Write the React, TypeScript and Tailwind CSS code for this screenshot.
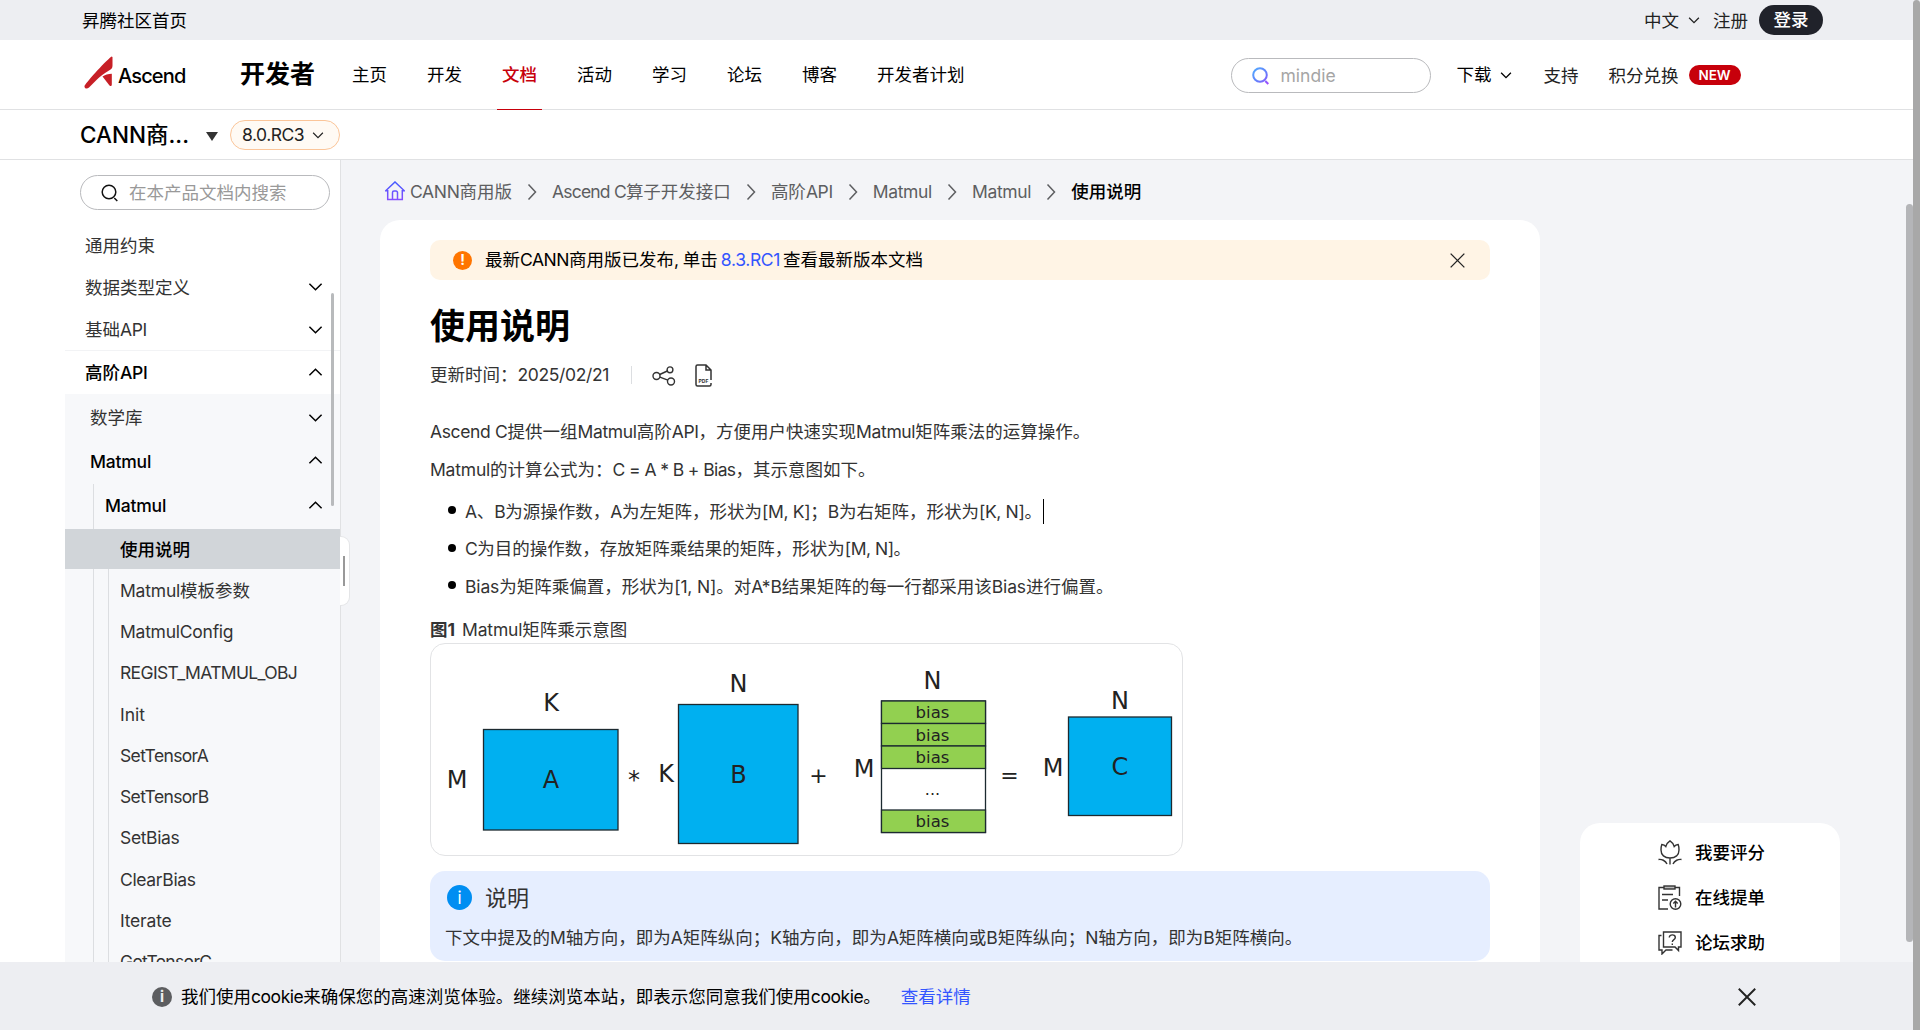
import type { ReactNode } from "react";
import clsx from "clsx";

const navItems = ["主页", "开发", "文档", "活动", "学习", "论坛", "博客", "开发者计划"];

const crumbs = [
  { label: "Ascend C算子开发接口", latin: "tracking-[-0.8px]" },
  { label: "高阶API" },
  { label: "Matmul" },
  { label: "Matmul" },
];

const leafItems = [
  { label: "Matmul模板参数", latin: "tracking-[-0.2px]" },
  { label: "MatmulConfig", latin: "tracking-[-0.25px]" },
  { label: "REGIST_MATMUL_OBJ", latin: "tracking-[-0.65px]" },
  { label: "Init", latin: "tracking-[0px]" },
  { label: "SetTensorA", latin: "tracking-[-0.65px]" },
  { label: "SetTensorB", latin: "tracking-[-0.65px]" },
  { label: "SetBias" },
  { label: "ClearBias" },
  { label: "Iterate", latin: "tracking-[-0.2px]" },
  { label: "GetTensorC", latin: "tracking-[-0.65px]" },
];

// Latin runs sit slightly tighter than the Chinese text around them.
function Mixed({ text, latin = "tracking-[-0.35px]" }: { text: string; latin?: string }) {
  return (
    <>
      {text.split(/([\x20-\x7e]+)/).map((part, i) =>
        /^[\x20-\x7e]+$/.test(part) ? (
          <span key={i} className={latin}>
            {part}
          </span>
        ) : (
          part
        ),
      )}
    </>
  );
}

type ChevronProps = { size: number; dir?: "up" | "down" | "right"; className?: string; strokeWidth?: number };

function Chevron({ size, dir = "down", className, strokeWidth = 1.5 }: ChevronProps) {
  const paths = {
    down: "M1.5 5 8 11.5 14.5 5",
    up: "M1.5 11 8 4.5 14.5 11",
    right: "M4.5 0.5 11.5 8 4.5 15.5",
  };
  return (
    <svg width={size} height={size} viewBox="0 0 16 16" fill="none" stroke="currentColor" strokeWidth={strokeWidth} className={clsx("shrink-0", className)}>
      <path d={paths[dir]} />
    </svg>
  );
}

function SearchIcon({ gradient }: { gradient?: boolean }) {
  return (
    <svg width="18" height="18" viewBox="0 0 18 18" fill="none" strokeWidth={gradient ? 2 : 1.5} stroke={gradient ? "url(#lupa)" : "#111"} className="mt-px shrink-0">
      <defs>
        <linearGradient id="lupa" x1="0" y1="0" x2="18" y2="18" gradientUnits="userSpaceOnUse">
          <stop stopColor="#4db1ff" />
          <stop offset="0.6" stopColor="#6a78fb" />
          <stop offset="1" stopColor="#b13dff" />
        </linearGradient>
      </defs>
      <circle cx="8" cy="8" r="6.800" />
      <path d="m13.300 14 3 3" />
    </svg>
  );
}

function CloseIcon({ size, strokeWidth }: { size: number; strokeWidth: number }) {
  return (
    <svg width={size} height={size} viewBox="0 0 16 16" stroke="#222" strokeWidth={strokeWidth}>
      <path d="M.7.7l14.6 14.6M15.3.7.7 15.3" />
    </svg>
  );
}

function Logo() {
  return (
    <div className="flex h-10 w-[103px] items-center">
      <svg width="29" height="34" viewBox="0 0 29 34" fill="#c71f26" className="mt-[-3px] ml-px shrink-0">
        <path d="M27.5 0.5 28.5 1V9.5C28.5 12 27.5 13 25 14.5 20 17.5 16 20.500 13 23.500L5 31.500C3 33.500 0 32.500 0.500 30 1 28 20 6.500 27.500 0.500Z" />
        <path d="M18.500 20.500C20.500 19 24.500 17.800 27.800 17.800V28C27.800 30 27 30.700 25.500 29.500Z" />
      </svg>
      <span className="mt-[2px] ml-[5px] text-[20px] font-medium tracking-[-0.85px] text-black">Ascend</span>
    </div>
  );
}

function Header() {
  return (
    <header>
      <div className="flex h-10 items-center justify-between bg-[#edeef2] pr-[97px] pl-[82px] text-black">
        <span className="mt-[2px]">昇腾社区首页</span>
        <div className="flex items-center text-[#222]">
          <span className="mt-px">中文</span>
          <Chevron size={12} className="ml-[9px]" strokeWidth={1.7} />
          <span className="mt-px ml-[13px]">注册</span>
          <span className="ml-[11px] flex h-[30px] w-[64px] items-center justify-center rounded-full bg-[#20222a] font-medium text-white">
            登录
          </span>
        </div>
      </div>
      <div className="flex h-[70px] items-center border-b border-[#e0e1e3] pl-[83px] text-black">
        <Logo />
        <span className="mt-[-2px] ml-[54px] text-[25px] font-bold">开发者</span>
        <nav className="mb-[-1px] ml-[37px] flex h-[70px] gap-10 self-end">
          {navItems.map((item) => (
            <span key={item} className={clsx("relative leading-[70px]", item === "文档" && "font-medium text-[#c7000b]")}>
              {item}
              {item === "文档" && <i className="absolute -right-[5px] bottom-0 -left-[5px] h-px bg-[#c7000b]" />}
            </span>
          ))}
        </nav>
        <div className="mt-px ml-[266px] flex h-[35px] w-[200px] items-center rounded-full border border-[#b9babd] bg-white pl-5">
          <SearchIcon gradient />
          <span className="mt-px ml-[11px] text-[#a5a5a5]">mindie</span>
        </div>
        <span className="mt-px ml-[26px]">下载</span>
        <Chevron size={12} className="ml-[8px]" strokeWidth={1.8} />
        <span className="mt-[2px] ml-[32px] text-[#222]">支持</span>
        <span className="mt-[2px] ml-[30px] text-[#222]">积分兑换</span>
        <span className="mt-px ml-[10px] flex h-5 w-[52px] items-center justify-center rounded-full bg-[#c7000b] text-[13.500px] font-semibold text-white">
          NEW
        </span>
      </div>
      <div className="flex h-[50px] items-center border-b border-[#e0e1e3] pl-[80px]">
        <span className="w-[126px] text-[22.500px] font-medium tracking-[0px] text-black">CANN商...</span>
        <svg width="12" height="9" viewBox="0 0 12 9" fill="#333" className="mt-[4px]">
          <path d="M0 0h12L6 9z" />
        </svg>
        <span className="ml-[12px] flex h-[30px] w-[110px] items-center justify-between rounded-full border border-[#fbc599] bg-[#fffaf4] pr-[15px] pl-[11px] text-[#222]">
          <span className="tracking-[-0.5px]">8.0.RC3</span>
          <Chevron size={12} />
        </span>
      </div>
    </header>
  );
}

type TreeRowProps = { label: string; className: string; open?: boolean; latin?: string };

function TreeRow({ label, className, open, latin }: TreeRowProps) {
  return (
    <li className={clsx("flex items-center justify-between pr-[17px]", className)}>
      <span className="mt-px">
        <Mixed text={label} latin={latin} />
      </span>
      {open !== undefined && <Chevron size={15} dir={open ? "up" : "down"} className="mt-[-1px] text-black" strokeWidth={1.6} />}
    </li>
  );
}

function Sidebar() {
  return (
    <aside className="relative w-[341px] shrink-0 border-r border-[#e0e1e3] bg-white pl-[65px] text-[#333]">
      <div className="mt-[15px] ml-[15px] flex h-[35px] w-[250px] items-center rounded-full border border-[#b9babd] pl-5">
        <SearchIcon />
        <span className="ml-[10px] text-[#999]">在本产品文档内搜索</span>
      </div>
      <ul className="mt-[14px]">
        <TreeRow label="通用约束" className="h-[42px] pl-5" />
        <TreeRow label="数据类型定义" className="h-[42px] pl-5" open={false} />
        <TreeRow label="基础API" className="h-[42px] pt-px pl-5" open={false} />
        <TreeRow label="高阶API" className="h-[44px] border-t border-[#f2f3f5] pl-5 font-medium text-black" open />
      </ul>
      <div className="relative h-[640px] bg-[#f7f8fa]">
        <i className="absolute top-[90px] bottom-0 left-[28px] w-px bg-[#dcdee1]" />
        <i className="absolute top-[175px] bottom-0 left-[43px] w-px bg-[#dcdee1]" />
        <ul className="relative">
          <TreeRow label="数学库" className="h-[46px] pt-px pl-[25px]" open={false} />
          <TreeRow label="Matmul" className="h-[42px] pl-[25px] font-medium text-black" open latin="tracking-[-0.2px]" />
          <TreeRow label="Matmul" className="h-[47px] pl-[40px] font-medium text-black" open latin="tracking-[-0.2px]" />
          <TreeRow label="使用说明" className="h-[40px] bg-[#d1d5d9] pl-[55px] font-medium text-black" />
          {leafItems.map((item) => (
            <TreeRow key={item.label} label={item.label} latin={item.latin} className="h-[41.300px] pt-px pl-[55px]" />
          ))}
        </ul>
      </div>
      <i className="absolute top-[133px] right-[6px] h-[213px] w-[3px] rounded-full bg-[#b8babc]" />
      <div className="absolute top-[376px] -right-[10px] flex h-[70px] w-[10px] items-center rounded-r-[9px] border-y border-r border-[#e4e5e7] bg-white pl-[3px]">
        <i className="h-[30px] w-[2px] bg-[#999]" />
      </div>
    </aside>
  );
}

function Breadcrumb() {
  return (
    <div className="mt-[14px] flex h-[36px] items-center text-[#5d5e61]">
      <svg width="20" height="20" viewBox="0 0 20 20" fill="none" stroke="url(#casa)" strokeWidth="1.500" className="mt-[-2px] ml-[5px]">
        <defs>
          <linearGradient id="casa" x1="10" y1="0" x2="10" y2="20" gradientUnits="userSpaceOnUse">
            <stop stopColor="#3f5bff" />
            <stop offset="1" stopColor="#8a4dff" />
          </linearGradient>
        </defs>
        <path d="M.7 9.800 10 1l9.300 8.800H17.300V18.500H2.700V9.800zM7.500 18v-6.500a1.500 1.500 0 0 1 1.500-1.500h2a1.500 1.500 0 0 1 1.500 1.500V18" />
      </svg>
      <span className="ml-[5px]">
        <Mixed text="CANN商用版" />
      </span>
      {crumbs.map((item, i) => (
        <span key={i} className="flex items-center">
          <Chevron size={16} dir="right" className="mr-[12px] ml-[12px]" />
          <span>
            <Mixed text={item.label} latin={item.latin} />
          </span>
        </span>
      ))}
      <Chevron size={16} dir="right" className="mr-[12px] ml-[12px]" />
      <span className="font-medium text-black">使用说明</span>
    </div>
  );
}

type BoxProps = { x: number; y: number; w: number; h: number; fill: string };

function Box({ x, y, w, h, fill }: BoxProps) {
  return <rect x={x} y={y} width={w} height={h} fill={fill} stroke="#1c2a30" strokeWidth="1.300" />;
}

// [text, center x, baseline y]
const figureLabels: [string, number, number][] = [
  ["K", 120, 67],
  ["M", 26, 144],
  ["A", 120, 144],
  ["K", 235, 138],
  ["N", 307.5, 48],
  ["B", 307.5, 139],
  ["M", 433, 133],
  ["N", 501.5, 45],
  ["M", 622, 132],
  ["N", 689, 65],
  ["C", 689, 131],
];

function Figure() {
  const blue = "#00b0f0";
  const green = "#92d050";
  return (
    <div className="h-[213px] w-[753px] overflow-hidden rounded-[15px] border border-[#e2e3e5]">
      <svg width="751" height="211" fontFamily="DejaVu Sans" textAnchor="middle" fill="#222">
        <Box x={52.500} y={85.500} w={134.500} h={100.500} fill={blue} />
        <Box x={247.500} y={60.500} w={119.500} h={139} fill={blue} />
        <Box x={450.500} y={57} w={104} h={131.500} fill="#fff" />
        {[57, 79.500, 102, 166].map((y) => (
          <Box key={y} x={450.500} y={y} w={104} h={22.500} fill={green} />
        ))}
        <Box x={637.500} y={73} w={103} h={98.500} fill={blue} />
        {figureLabels.map(([t, x, y], i) => (
          <text key={i} x={x} y={y} fontSize="24">
            {t}
          </text>
        ))}
        {[74, 96.500, 119, 182.500].map((y) => (
          <text key={y} x="501.500" y={y} fontSize="16.500">
            bias
          </text>
        ))}
        <text x="501.500" y="151" fontSize="16">...</text>
        <text x="203" y="144" fontSize="24">*</text>
        <text x="387.500" y="138.500" fontSize="22">+</text>
        <text x="578.500" y="138.500" fontSize="22">=</text>
      </svg>
    </div>
  );
}

function Bullet({ children }: { children: ReactNode }) {
  return (
    <li className="flex h-[37.500px] items-center">
      <i className="mt-[-3px] ml-[17.500px] size-2 rounded-full bg-black" />
      <span className="ml-[9.500px]">{children}</span>
    </li>
  );
}

function Article() {
  return (
    <main className="h-[860px] w-[1160px] rounded-[20px] bg-white px-[50px] pt-5 text-[#333]">
      <div className="flex h-10 items-center rounded-[10px] bg-[#fff4e5] pl-[23px] text-black">
        <span className="flex size-[19px] items-center justify-center rounded-full bg-[#ff7500] text-[14px] font-bold text-white">!</span>
        <span className="ml-[13px]">
          <Mixed text="最新CANN商用版已发布, 单击" latin="tracking-[-0.5px]" />
          <span className="mx-[3px] tracking-[-0.35px] text-[#3355ff]">8.3.RC1</span>
          查看最新版本文档
        </span>
        <span className="mr-[25px] ml-auto">
          <CloseIcon size={15} strokeWidth={1.4} />
        </span>
      </div>
      <h1 className="mt-[21px] text-[35px] leading-[50px] font-bold text-black">使用说明</h1>
      <div className="mt-[9px] flex h-[30px] items-center">
        <span>
          更新时间：<span className="tracking-[-0.35px]">2025/02/21</span>
        </span>
        <i className="ml-[22px] h-[18px] w-px bg-[#dcdee1]" />
        <svg width="24" height="20" viewBox="0 0 24 20" fill="none" stroke="#333" strokeWidth="1.400" className="mt-px ml-[20px]">
          <circle cx="4.500" cy="10" r="3.500" />
          <circle cx="18" cy="3.800" r="2.900" />
          <circle cx="19" cy="15.500" r="3.500" />
          <path d="m7.700 8.500 7.600-3.500M7.900 11.200l7.900 3" />
        </svg>
        <svg width="17" height="23" viewBox="0 0 17 23" fill="none" stroke="#333" strokeWidth="1.500" className="ml-[19px]">
          <path d="M16 16V6L11 1H2.500A1.500 1.500 0 0 0 1 2.500v18A1.500 1.500 0 0 0 2.500 22h12A1.500 1.500 0 0 0 16 20.500V19M11 1v5h5" />
          <text x="8.500" y="18.500" fontSize="5" fontWeight="700" textAnchor="middle" fill="#333" stroke="none">PDF</text>
        </svg>
      </div>
      <p className="mt-[23px] leading-[38px]">
        <Mixed text="Ascend C提供一组Matmul高阶API，方便用户快速实现Matmul矩阵乘法的运算操作。" />
      </p>
      <p className="leading-[38px]">
        <Mixed text="Matmul的计算公式为：" latin="tracking-[-0.2px]" />
        <Mixed text="C = A * B + Bias，其示意图如下。" latin="tracking-[-0.6px]" />
      </p>
      <ul className="mt-[4px]">
        <Bullet>
          <span className="flex items-center">
            <span>
              <Mixed text="A、B为源操作数，A为左矩阵，形状为[M, K]；B为右矩阵，形状为[K, N]。" />
            </span>
            <i className="ml-[1px] h-[25px] w-px bg-black" />
          </span>
        </Bullet>
        <Bullet>
          <Mixed text="C为目的操作数，存放矩阵乘结果的矩阵，形状为[M, N]。" latin="tracking-[-0.5px]" />
        </Bullet>
        <Bullet>
          <Mixed text="Bias为矩阵乘偏置，形状为[1, N]。对A*B结果矩阵的每一行都采用该Bias进行偏置。" latin="tracking-[-0.15px]" />
        </Bullet>
      </ul>
      <p className="mt-[11px] leading-[26px]">
        <b className="mr-[2px]">图1</b> <Mixed text="Matmul矩阵乘示意图" latin="tracking-[-0.15px]" />
      </p>
      <Figure />
      <section className="mt-[15px] h-[90px] rounded-[15px] bg-[#e6eeff] px-[15px] pt-[11px]">
        <div className="flex h-8 items-center">
          <span className="ml-[2px] flex size-[25px] items-center justify-center rounded-full bg-[#008ef2] text-[17px] text-white">i</span>
          <span className="ml-[13px] text-[22px]">说明</span>
        </div>
        <p className="mt-[10px] leading-[28px]">
          <Mixed
            text="下文中提及的M轴方向，即为A矩阵纵向；K轴方向，即为A矩阵横向或B矩阵纵向；N轴方向，即为B矩阵横向。"
            latin="tracking-[-0.1px]"
          />
        </p>
      </section>
    </main>
  );
}

function TulipIcon() {
  return (
    <svg width="24" height="25" viewBox="0 0 24 25" fill="none" stroke="#333" strokeWidth="1.400">
      <path d="M12 18c-5.500 0-9-3-9-8 0-2 .2-4 .8-5.500 1.500.2 3 .8 4 2C8.600 4 10 2 12 .8c2 1.200 3.400 3.200 4.200 5.700 1-1.200 2.500-1.800 4-2 .6 1.500.8 3.500.8 5.500 0 5-3.500 8-9 8ZM12 18v6.500M.5 19.500c3-.5 7 1 8.500 4.500M23.500 19.500c-3-.5-7 1-8.500 4.500" />
    </svg>
  );
}

function TicketIcon() {
  return (
    <svg width="24" height="26" viewBox="0 0 24 26" fill="none" stroke="#333" strokeWidth="1.400">
      <path d="M6 2.500H1V24h9M17 2.500h4.500V11M4 9.500h11M4 15h6" />
      <rect x="6" y="1" width="11" height="3" fill="#bbb" />
      <circle cx="17.500" cy="19" r="5.300" />
      <path d="M17.500 22.500v-6M15.300 18.500l2.200-2.200 2.200 2.200" />
    </svg>
  );
}

function ForumIcon() {
  return (
    <svg width="24" height="24" viewBox="0 0 24 24" fill="none" stroke="#333" strokeWidth="1.400">
      <path d="M5.500 1H23v15h-2.500v3.500L17 16H5.500ZM3.500 4.500H1V19h3v4l4-4h6.500" />
      <path d="M11.300 6.500c0-3.500 6-3.500 6 0 0 2.300-3 2-3 4.500M14.300 12.500V14" />
    </svg>
  );
}

function HelpPanel() {
  const rows = [
    { label: "我要评分", icon: <TulipIcon /> },
    { label: "在线提单", icon: <TicketIcon /> },
    { label: "论坛求助", icon: <ForumIcon /> },
  ];
  return (
    <div className="absolute top-[823px] left-[1580px] h-[157px] w-[260px] rounded-[20px] bg-white pt-[7px] pl-[78px]">
      {rows.map((row) => (
        <div key={row.label} className="flex h-[45px] items-center gap-[13px] font-medium text-black">
          {row.icon}
          {row.label}
        </div>
      ))}
    </div>
  );
}

function CookieBar() {
  return (
    <div className="absolute bottom-0 left-0 flex h-[68px] w-[1913px] items-center bg-[#edeef2] pl-[152px] text-black">
      <span className="mt-px flex size-5 items-center justify-center rounded-full bg-[#5c5d60] text-[15px] font-bold text-[#edeef2]">i</span>
      <span className="mt-[2px] ml-[9px]">
        <Mixed text="我们使用cookie来确保您的高速浏览体验。继续浏览本站，即表示您同意我们使用cookie。" latin="tracking-[-0.45px]" />
      </span>
      <span className="mt-[2px] ml-[20px] text-[#3355ff]">查看详情</span>
      <span className="mt-px mr-[157px] ml-auto">
        <CloseIcon size={18} strokeWidth={1.7} />
      </span>
    </div>
  );
}

export default function App() {
  return (
    <div className="relative h-[1030px] w-[1920px] overflow-hidden bg-white font-[Inter,'Noto_Sans_CJK_SC',sans-serif] text-[17.500px] leading-[26px] whitespace-nowrap">
      <Header />
      <div className="flex h-[870px]">
        <Sidebar />
        <div className="grow bg-[#f3f4f7] pl-[39px]">
          <Breadcrumb />
          <div className="mt-[10px]">
            <Article />
          </div>
        </div>
      </div>
      <HelpPanel />
      <CookieBar />
      <i className="absolute top-[204px] right-[7px] h-[738px] w-[7px] rounded-full bg-[#b4b5b8]" />
      <i className="absolute top-0 right-0 h-[1030px] w-[7px] rounded-t-[4px] bg-[#a8a8a8]" />
    </div>
  );
}
